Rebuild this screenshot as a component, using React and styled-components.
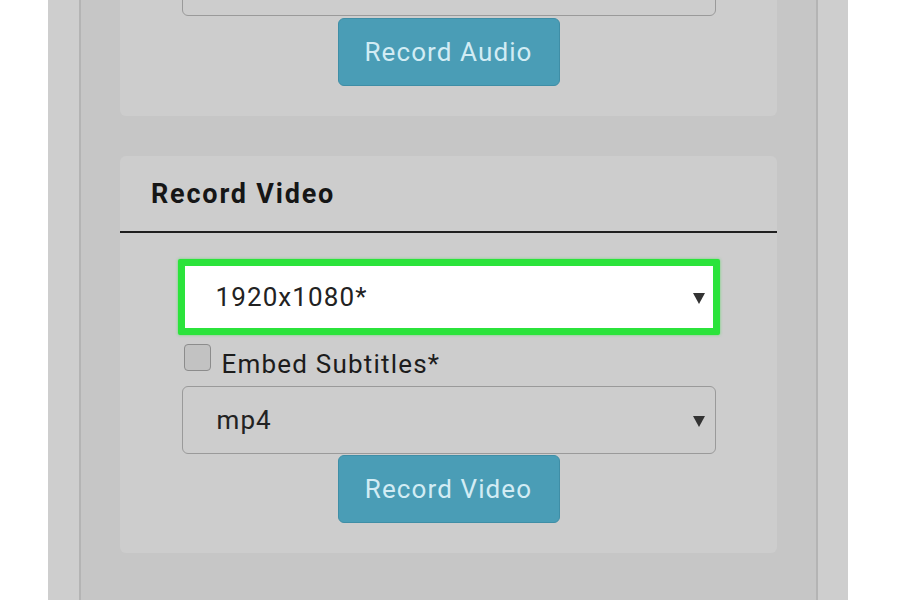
import React from 'react';
import styled, { createGlobalStyle } from 'styled-components';

const GlobalStyle = createGlobalStyle`
  html, body {
    margin: 0;
    padding: 0;
    background: #ffffff;
    font-family: Roboto, "Liberation Sans", sans-serif;
  }
`;

const Page = styled.div`
  width: 900px;
  height: 600px;
  overflow: hidden;
  padding-left: 48px;
  box-sizing: border-box;
  display: flex;
`;

const Frame = styled.div`
  width: 800px;
  height: 100%;
  background: #cecece;
  padding: 0 30px 0 31px;
  box-sizing: border-box;
  display: flex;
`;

const Column = styled.div`
  flex: 1;
  background: #c6c6c6;
  border-left: 2px solid #b4b4b4;
  border-right: 2px solid #b4b4b4;
  padding: 0 39px 0 39px;
  display: flex;
  flex-direction: column;
  gap: 40px;
`;

const Panel = styled.section`
  background: #cdcdcd;
  border-radius: 6px;
  display: flex;
  flex-direction: column;
  margin-top: ${props => props.offset || 0}px;
  padding-bottom: 30px;
`;

const Header = styled.div`
  height: 75px;
  border-bottom: 2px solid #1f1f1f;
  display: flex;
  align-items: center;
  padding-left: 31px;
  font-size: 27px;
  font-weight: 700;
  letter-spacing: 1.8px;
  color: #161616;
`;

const Body = styled.div`
  width: 534px;
  margin: ${props => props.top || 0}px auto 0;
  display: flex;
  flex-direction: column;
  align-items: stretch;
`;

const Select = styled.div`
  height: ${props => (props.highlight ? 76 : 68)}px;
  box-sizing: border-box;
  margin: 0 ${props => (props.highlight ? -4 : 0)}px;
  border: ${props => (props.highlight ? '7px solid #2be33b' : '1px solid #9a9a9a')};
  border-radius: ${props => (props.highlight ? 2 : 6)}px;
  background: ${props => (props.highlight ? '#ffffff' : 'transparent')};
  box-shadow: ${props => (props.highlight ? '0 0 3px rgba(43, 227, 59, 0.6)' : 'none')};
  display: flex;
  align-items: center;
  justify-content: space-between;
  padding: 0 ${props => (props.highlight ? 8 : 10)}px 0 ${props => (props.highlight ? 31 : 34)}px;
  font-size: 26px;
  letter-spacing: 1.1px;
  color: #222;
`;

const Arrow = styled.span`
  width: 0;
  height: 0;
  border-left: 6px solid transparent;
  border-right: 6px solid transparent;
  border-top: 11px solid #333;
  margin-top: 2px;
`;

const CheckRow = styled.label`
  display: flex;
  align-items: center;
  gap: 11px;
  height: 51px;
  box-sizing: border-box;
  padding: 7px 0 0 2px;
  font-size: 26px;
  letter-spacing: 1.2px;
  color: #1c1c1c;
`;

const Box = styled.span`
  width: 25px;
  height: 25px;
  border: 1px solid #8c8c8c;
  border-radius: 4px;
  background: #c2c2c2;
  margin-top: -13px;
`;

const Button = styled.button`
  align-self: center;
  width: 222px;
  height: 68px;
  margin-top: ${props => props.top || 0}px;
  background: #4a9db6;
  border: 1px solid #3f8ea6;
  border-radius: 6px;
  color: #d2ecf4;
  font-family: Roboto, "Liberation Sans", sans-serif;
  font-size: 26px;
  letter-spacing: 1.1px;
  padding: 0;
`;

export default function App() {
  return (
    <>
      <GlobalStyle />
      <Page>
        <Frame>
          <Column>
            <Panel offset={-90}>
              <Body top={38}>
                <Select />
                <Button top={2}>Record Audio</Button>
              </Body>
            </Panel>
            <Panel>
              <Header>Record Video</Header>
              <Body top={26}>
                <Select highlight>
                  <span>1920x1080*</span>
                  <Arrow />
                </Select>
                <CheckRow>
                  <Box />
                  Embed Subtitles*
                </CheckRow>
                <Select>
                  <span>mp4</span>
                  <Arrow />
                </Select>
                <Button top={1}>Record Video</Button>
              </Body>
            </Panel>
          </Column>
        </Frame>
      </Page>
    </>
  );
}
